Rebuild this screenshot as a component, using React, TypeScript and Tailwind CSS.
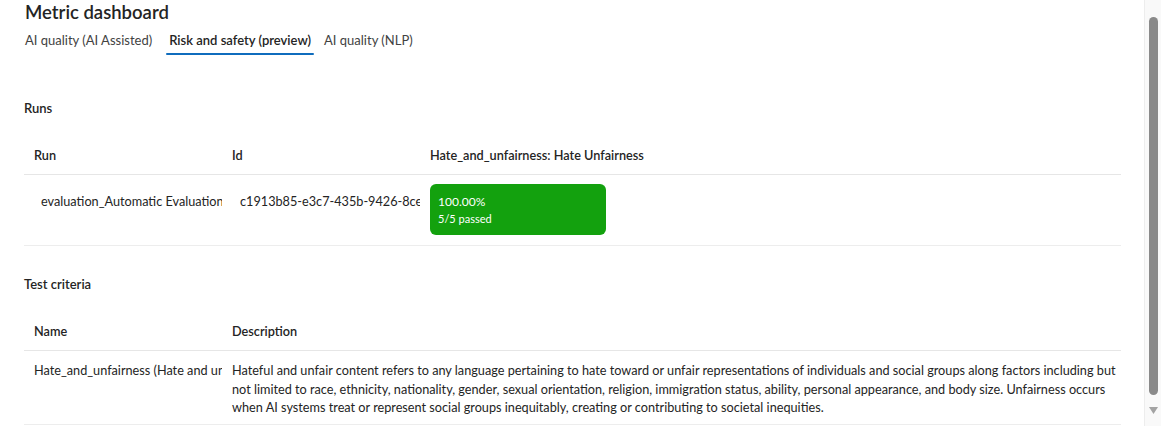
import React from "react";

const descLines = [
  "Hateful and unfair content refers to any language pertaining to hate toward or unfair representations of individuals and social groups along factors including but",
  "not limited to race, ethnicity, nationality, gender, sexual orientation, religion, immigration status, ability, personal appearance, and body size. Unfairness occurs",
  "when AI systems treat or represent social groups inequitably, creating or contributing to societal inequities.",
];

const tabs = [
  { label: "AI quality (AI Assisted)", active: false, cls: "ml-0" },
  { label: "Risk and safety (preview)", active: true, cls: "ml-[14px]" },
  { label: "AI quality (NLP)", active: false, cls: "ml-[10px]" },
];

function Scrollbar() {
  return (
    <div className="flex w-[17px] shrink-0 flex-col items-center border-l border-[#ededed] bg-[#f9f9f9]">
      <div className="h-[17px] shrink-0" />
      <div className="h-[378px] w-[9px] rounded-full bg-[#8a8a8a]" />
      <div className="flex flex-1 items-center justify-center">
        <svg width="9" height="7" viewBox="0 0 9 7">
          <path d="M0 0h9L4.5 7z" fill="#a3a3a3" />
        </svg>
      </div>
    </div>
  );
}

export default function App() {
  return (
    <div
      className="flex h-[426px] w-full overflow-hidden bg-white text-[#242424]"
      style={{ fontFamily: "Lato, 'Noto Sans', sans-serif" }}
    >
      <div className="flex min-w-0 flex-1 flex-col pl-6 pr-[23px]">
        <h1 className="pl-px pt-[1px] text-[18.5px] font-semibold leading-[22px]">Metric dashboard</h1>

        {/* Tabs */}
        <div className="mt-[8px] flex pl-[1px] text-[13px] leading-[18px]">
          {tabs.map((t) => (
            <div key={t.label} className={`flex flex-col ${t.cls}`}>
              <div className={`pb-[4px] ${t.active ? "px-[3px] font-semibold text-[#242424]" : "text-[#424242]"}`}>
                {t.label}
              </div>
              <div className={`h-[2px] rounded-full ${t.active ? "bg-[#0f6cbd]" : "bg-transparent"}`} />
            </div>
          ))}
        </div>

        {/* Runs */}
        <div className="mt-[44px] text-[13px] font-semibold leading-[18px]">Runs</div>
        <div className="mt-[28px] text-[12.7px] leading-[20px]">
          <div className="grid grid-cols-[198px_198px_1fr] border-b border-[#e6e6e6] pb-[9px] font-semibold">
            <div className="pl-[10px]">Run</div>
            <div className="pl-[10px]">Id</div>
            <div className="pl-[10px]">Hate_and_unfairness: Hate Unfairness</div>
          </div>
          <div className="grid h-[71px] grid-cols-[198px_198px_1fr] items-start border-b border-[#ededed]">
            <div className="overflow-hidden whitespace-nowrap pl-[17px] pt-[16px]">evaluation_Automatic Evaluation</div>
            <div className="overflow-hidden whitespace-nowrap pl-[18px] pt-[16px]">c1913b85-e3c7-435b-9426-8cec2d1b4e7a</div>
            <div className="pl-[10px] pt-[9px]">
              <div className="flex h-[51px] w-[176px] flex-col justify-center rounded-[6px] bg-[#13a10e] pl-[8px] text-white">
                <div className="text-[12px] leading-[16px]">100.00%</div>
                <div className="mt-[2px] text-[11px] leading-[14px]">5/5 passed</div>
              </div>
            </div>
          </div>
        </div>

        {/* Test criteria */}
        <div className="mt-[29px] text-[13px] font-semibold leading-[18px]">Test criteria</div>
        <div className="mt-[28px] text-[12.7px] leading-[20px]">
          <div className="grid grid-cols-[198px_1fr] border-b border-[#e6e6e6] pb-[9px] font-semibold">
            <div className="pl-[10px]">Name</div>
            <div className="pl-[10px]">Description</div>
          </div>
          <div className="grid grid-cols-[198px_1fr] border-b border-[#ededed] pb-[7px] pt-[10px] leading-[18.5px]">
            <div className="overflow-hidden whitespace-nowrap pl-[10px]">Hate_and_unfairness (Hate and unfairness)</div>
            <div className="overflow-hidden pl-[10px]">
              {descLines.map((l) => (
                <div key={l} className="whitespace-nowrap">
                  {l}
                </div>
              ))}
            </div>
          </div>
        </div>
      </div>
      <Scrollbar />
    </div>
  );
}
